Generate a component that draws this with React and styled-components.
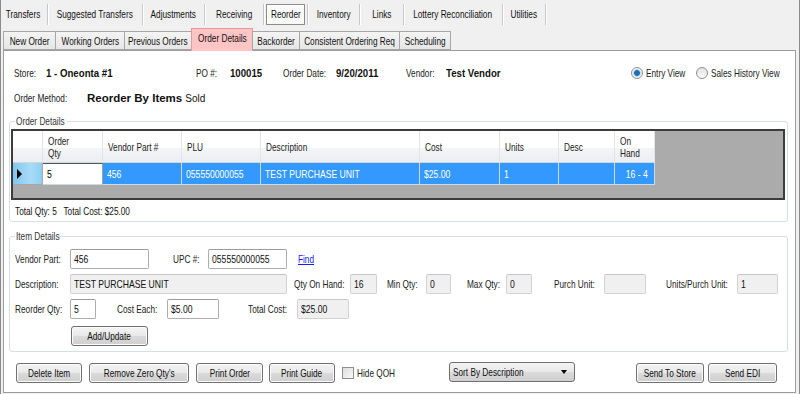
import React from 'react';
import styled, { createGlobalStyle } from 'styled-components';

const UI_FONT = '"Liberation Sans", Arial, sans-serif';
// the source UI uses a squeezed Tahoma-like face; Liberation Sans is squeezed to match
const SQUEEZE = 0.75;

const GlobalStyle = createGlobalStyle`
  html, body { margin: 0; padding: 0; background: #f0f0f0; }
  body { font-family: ${UI_FONT}; font-size: 11px; color: #111; }
  * { box-sizing: border-box; }
`;

const T = styled.span`
  display: inline-block;
  white-space: ${({ pre }) => (pre ? 'pre' : 'nowrap')};
  transform: scaleX(${({ k }) => k || SQUEEZE});
  transform-origin: ${({ origin }) => origin || 'left'} center;
`;

const Window = styled.div`
  width: 800px;
  height: 394px;
  background: #f0f0f0;
  border-left: 1px solid #8a8a8a;
  border-right: 1px solid #8a8a8a;
  display: flex;
  flex-direction: column;
  overflow: hidden;
`;

// --- main tab strip ---
const TopTabs = styled.div`
  display: flex;
  height: 27px;
  align-items: center;
  padding-top: 1px;
  margin-left: -1px;
`;

const TopTab = styled.div`
  width: ${({ w }) => w}px;
  height: 21px;
  display: flex;
  align-items: center;
  justify-content: center;
  border-right: 1px solid #c8c8c8;
  box-shadow: 1px 0 0 #fff;
`;

const ActiveTopTab = styled.div`
  margin: 0 2px;
  height: 21px;
  width: 39px;
  display: flex;
  align-items: center;
  justify-content: center;
  border: 1px solid #8c8c8c;
  background: #fafafa;
  box-shadow: inset 1px 1px 0 #fff;
`;

// --- sub tab strip ---
const SubTabs = styled.div`
  display: flex;
  align-items: flex-end;
  height: 23px;
  padding-left: 3px;
  position: relative;
  z-index: 1;
`;

const SubTab = styled.div`
  width: ${({ w }) => w}px;
  height: ${({ active }) => (active ? 23 : 19)}px;
  margin-bottom: ${({ active }) => (active ? -1 : 0)}px;
  display: flex;
  align-items: center;
  justify-content: center;
  padding-bottom: ${({ active }) => (active ? 4 : 0)}px;
  border: 1px solid ${({ active }) => (active ? '#e49a9a' : '#a7a7a7')};
  border-bottom: ${({ active }) => (active ? 'none' : '1px solid #a7a7a7')};
  margin-left: -1px;
  background: ${({ active }) => (active ? '#ffc4c4' : 'linear-gradient(#f4f4f4, #e6e6e6)')};
`;

const Panel = styled.div`
  flex: 1;
  margin: 0 3px 1px 2px;
  background: #fff;
  border: 1px solid #9c9c9c;
  display: flex;
  flex-direction: column;
  padding: 0 7px 0 5px;
`;

// --- header info ---
const InfoRow = styled.div`
  display: flex;
  align-items: center;
  height: 25px;
  padding-left: 5px;
  margin-top: ${({ mt }) => mt || 0}px;
`;

const Cap = styled(T)`
  width: ${({ w }) => (w ? `${w}px` : 'auto')};
  margin-left: ${({ ml }) => ml || 0}px;
  flex-shrink: 0;
  color: #222;
`;

const Value = styled(T).attrs({ k: 0.84 })`
  font-weight: bold;
  font-size: 11.5px;
  width: ${({ w }) => w}px;
  flex-shrink: 0;
`;

const Method = styled.span`
  font-weight: bold;
  font-size: 11.5px;
  white-space: nowrap;
`;

const MethodSmall = styled.span`
  font-size: 10px;
  margin-left: 3px;
  margin-top: 2px;
`;

const Radio = styled.span`
  width: 12px;
  height: 12px;
  border-radius: 50%;
  border: 1px solid #8e8f8f;
  background: ${({ on }) => (on ? 'radial-gradient(circle, #1f6fb6 0 2.5px, #7ab8e8 3px, #f3f3f3 4px)' : 'linear-gradient(#e2e2e2, #fbfbfb)')};
  margin-right: 3px;
  flex-shrink: 0;
`;

// --- group boxes ---
const Group = styled.fieldset`
  margin: ${({ mt }) => mt || 0}px 0 0 0;
  padding: ${({ pad }) => pad};
  border: 1px solid #d5dfe5;
  border-radius: 3px;
  min-width: 0;
`;

const Legend = styled.legend`
  width: ${({ w }) => w}px;
  padding: 0 0 0 1px;
  margin-left: ${({ ml }) => ml}px;
  color: #333;
  line-height: 13px;
`;

// --- data grid ---
const COLS = '30px 60px 79px 79px 159px 80px 59px 56px 40px 1fr';

const Grid = styled.div`
  border: 2px solid #3c3c3c;
  background: #ababab;
  height: 71px;
`;

const GridRow = styled.div`
  display: grid;
  grid-template-columns: ${COLS};
  height: ${({ h }) => h}px;
`;

const HeadCell = styled.div`
  background: linear-gradient(#ffffff 0%, #ffffff 55%, #f4f5f7 56%, #eceef1 100%);
  border-right: 1px solid #e2e4e7;
  border-bottom: 1px solid #d4d6d9;
  display: flex;
  align-items: center;
  padding-left: 5px;
  line-height: 12px;
  color: #222;
`;

const Cell = styled.div`
  background: ${({ edit }) => (edit ? '#fff' : '#3399ff')};
  color: ${({ edit }) => (edit ? '#000' : '#fff')};
  border-right: 1px solid ${({ edit }) => (edit ? '#a0a0a0' : '#cfd8e3')};
  border-bottom: 1px solid #cfd8e3;
  border-top: ${({ edit }) => (edit ? '1px solid #555' : 'none')};
  display: flex;
  align-items: center;
  justify-content: ${({ center }) => (center ? 'center' : 'flex-start')};
  padding-left: 4px;
  font-size: 11.5px;
`;

const RowHead = styled.div`
  background: linear-gradient(90deg, #7fc6f0, #a8dcf8 60%, #8ccff2);
  border-right: 1px solid #a8a8a8;
  border-bottom: 1px solid #a8a8a8;
  display: flex;
  align-items: center;
  padding-left: 4px;
`;

const Triangle = styled.span`
  width: 0;
  height: 0;
  border-top: 5px solid transparent;
  border-bottom: 5px solid transparent;
  border-left: 5px solid #000;
`;

const Totals = styled.div`
  height: 20px;
  display: flex;
  align-items: center;
  margin-left: 4px;
  margin-top: 1px;
`;

// --- item detail fields ---
const FieldRow = styled.div`
  display: flex;
  align-items: center;
  height: 20px;
  margin-top: ${({ mt }) => mt || 0}px;
`;

const Input = styled.div`
  width: ${({ w }) => w}px;
  height: 20px;
  flex-shrink: 0;
  border: 1px solid ${({ disabled }) => (disabled ? '#cfd3d7' : '#abadb3')};
  border-top-color: ${({ disabled }) => (disabled ? '#c3c7cb' : '#999ca3')};
  background: ${({ disabled }) => (disabled ? '#f0f0f0' : '#fff')};
  border-radius: 2px;
  display: flex;
  align-items: center;
  padding-left: 3px;
  font-size: 11.5px;
  color: #111;
  overflow: hidden;
`;

const FindLink = styled(T)`
  color: #1a1aff;
  text-decoration: underline;
  margin-left: 11px;
  cursor: pointer;
`;

const Button = styled.button`
  font-family: ${UI_FONT};
  font-size: 11px;
  color: #111;
  width: ${({ w }) => w}px;
  height: 20px;
  margin-left: ${({ ml }) => ml || 0}px;
  flex-shrink: 0;
  padding: 0;
  display: flex;
  align-items: center;
  justify-content: center;
  border: 1px solid #707070;
  border-radius: 3px;
  background: linear-gradient(#f4f4f4 0%, #e8e8e8 50%, #dadada 51%, #cfcfcf 100%);
  box-shadow: inset 0 0 0 1px #fbfbfb;
`;

const BottomBar = styled.div`
  display: flex;
  align-items: center;
  height: 24px;
  margin-top: 9px;
  padding: 0 11px 0 7px;
`;

const Check = styled.span`
  width: 12px;
  height: 12px;
  border: 1px solid #8e8f8f;
  background: linear-gradient(135deg, #dcdcdc, #fafafa);
  margin-left: 7px;
  margin-right: 3px;
  flex-shrink: 0;
`;

const Select = styled.div`
  width: 126px;
  height: 20px;
  margin-left: 60px;
  margin-top: -3px;
  border: 1px solid #707070;
  border-radius: 3px;
  background: linear-gradient(#f4f4f4 0%, #e8e8e8 50%, #dadada 51%, #cfcfcf 100%);
  display: flex;
  align-items: center;
  justify-content: space-between;
  padding: 0 7px 0 3px;
  flex-shrink: 0;
`;

const Caret = styled.span`
  width: 0;
  height: 0;
  border-left: 3.5px solid transparent;
  border-right: 3.5px solid transparent;
  border-top: 4px solid #000;
`;

const Spacer = styled.div`
  flex: 1;
`;

const topTabs = [
  ['Transfers', 48],
  ['Suggested Transfers', 95],
  ['Adjustments', 62],
  ['Receiving', 59],
];
const topTabsAfter = [
  ['Inventory', 52],
  ['Links', 44],
  ['Lottery Reconciliation', 99],
  ['Utilities', 43],
];
const subTabs = [
  ['New Order', 53],
  ['Working Orders', 70],
  ['Previous Orders', 68],
  ['Order Details', 62, true],
  ['Backorder', 48],
  ['Consistent Ordering Req', 101],
  ['Scheduling', 52],
];

const C = ({ children }) => <T origin="center">{children}</T>;

export default function App() {
  return (
    <>
      <GlobalStyle />
      <Window>
        <TopTabs>
          {topTabs.map(([t, w]) => (
            <TopTab key={t} w={w}><C>{t}</C></TopTab>
          ))}
          <ActiveTopTab><C>Reorder</C></ActiveTopTab>
          <TopTab w={1} />
          {topTabsAfter.map(([t, w]) => (
            <TopTab key={t} w={w}><C>{t}</C></TopTab>
          ))}
        </TopTabs>
        <SubTabs>
          {subTabs.map(([t, w, active]) => (
            <SubTab key={t} w={w} active={active}><C>{t}</C></SubTab>
          ))}
        </SubTabs>
        <Panel>
          <InfoRow mt={9}>
            <Cap w={32}>Store:</Cap>
            <Value w={150}>1 - Oneonta #1</Value>
            <Cap w={34}>PO #:</Cap>
            <Value w={53}>100015</Value>
            <Cap w={53}>Order Date:</Cap>
            <Value w={70}>9/20/2011</Value>
            <Cap w={40}>Vendor:</Cap>
            <Value w={185}>Test Vendor</Value>
            <Radio on />
            <Cap w={50}>Entry View</Cap>
            <Radio />
            <Cap w={70}>Sales History View</Cap>
          </InfoRow>
          <InfoRow>
            <Cap w={73}>Order Method:</Cap>
            <Method>Reorder By Items</Method>
            <MethodSmall>Sold</MethodSmall>
          </InfoRow>
          <Group mt={5} pad="1px 2px 0 1px">
            <Legend w={52} ml={4}><T>Order Details</T></Legend>
            <Grid>
              <GridRow h={32}>
                <HeadCell />
                <HeadCell><T>Order<br />Qty</T></HeadCell>
                <HeadCell><T>Vendor Part #</T></HeadCell>
                <HeadCell><T>PLU</T></HeadCell>
                <HeadCell><T>Description</T></HeadCell>
                <HeadCell><T>Cost</T></HeadCell>
                <HeadCell><T>Units</T></HeadCell>
                <HeadCell><T>Desc</T></HeadCell>
                <HeadCell><T>On<br />Hand</T></HeadCell>
                <div />
              </GridRow>
              <GridRow h={22}>
                <RowHead><Triangle /></RowHead>
                <Cell edit><T>5</T></Cell>
                <Cell><T>456</T></Cell>
                <Cell><T>055550000055</T></Cell>
                <Cell><T>TEST PURCHASE UNIT</T></Cell>
                <Cell><T>$25.00</T></Cell>
                <Cell><T>1</T></Cell>
                <Cell />
                <Cell center><C>16 - 4</C></Cell>
                <div />
              </GridRow>
            </Grid>
            <Totals><T pre>{'Total Qty: 5   Total Cost: $25.00'}</T></Totals>
          </Group>
          <Group mt={8} pad="6px 4px 5px 5px">
            <Legend w={44} ml={0}><T>Item Details</T></Legend>
            <FieldRow>
              <Cap w={55}>Vendor Part:</Cap>
              <Input w={79}><T>456</T></Input>
              <Cap w={35} ml={24}>UPC #:</Cap>
              <Input w={79}><T>055550000055</T></Input>
              <FindLink>Find</FindLink>
            </FieldRow>
            <FieldRow mt={5}>
              <Cap w={55}>Description:</Cap>
              <Input w={217} disabled><T>TEST PURCHASE UNIT</T></Input>
              <Cap w={56} ml={7}>Qty On Hand:</Cap>
              <Input w={27} disabled><T>16</T></Input>
              <Cap w={39} ml={10}>Min Qty:</Cap>
              <Input w={25} disabled><T>0</T></Input>
              <Cap w={39} ml={16}>Max Qty:</Cap>
              <Input w={26} disabled><T>0</T></Input>
              <Cap w={50} ml={22}>Purch Unit:</Cap>
              <Input w={42} disabled />
              <Cap w={71} ml={20}>Units/Purch Unit:</Cap>
              <Input w={41} disabled><T>1</T></Input>
            </FieldRow>
            <FieldRow mt={5}>
              <Cap w={55}>Reorder Qty:</Cap>
              <Input w={26}><T>5</T></Input>
              <Cap w={50} ml={21}>Cost Each:</Cap>
              <Input w={52}><T>$5.00</T></Input>
              <Cap w={49} ml={29}>Total Cost:</Cap>
              <Input w={52} disabled><T>$25.00</T></Input>
            </FieldRow>
            <FieldRow mt={7}>
              <Button w={77} ml={56}><C>Add/Update</C></Button>
            </FieldRow>
          </Group>
          <BottomBar>
            <Button w={66}><C>Delete Item</C></Button>
            <Button w={100} ml={7}><C>Remove Zero Qty's</C></Button>
            <Button w={67} ml={7}><C>Print Order</C></Button>
            <Button w={66} ml={6}><C>Print Guide</C></Button>
            <Check />
            <Cap w={32}>Hide QOH</Cap>
            <Select>
              <T>Sort By Description</T>
              <Caret />
            </Select>
            <Spacer />
            <Button w={68}><C>Send To Store</C></Button>
            <Button w={69} ml={4}><C>Send EDI</C></Button>
          </BottomBar>
        </Panel>
      </Window>
    </>
  );
}
